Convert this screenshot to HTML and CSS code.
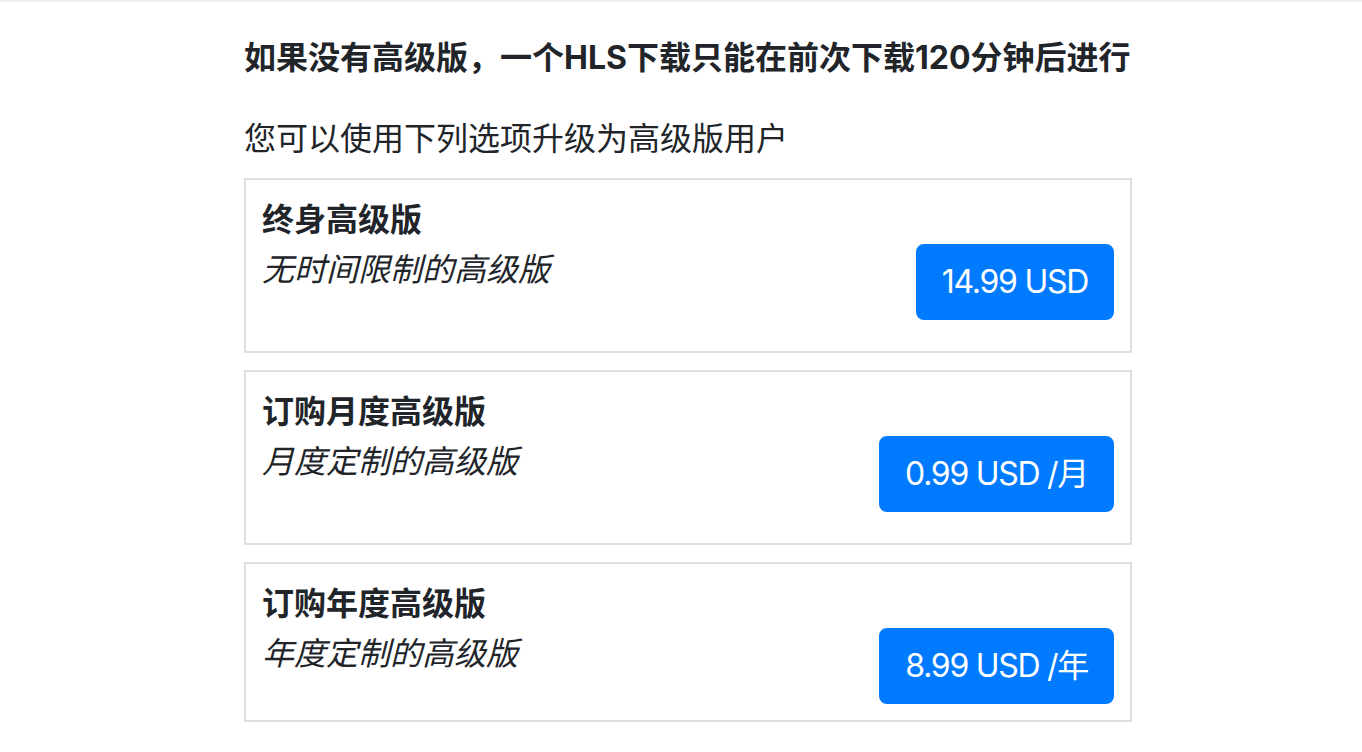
FILE: index.html
```html
<!DOCTYPE html>
<html lang="zh">
<head>
<meta charset="utf-8">
<title>高级版</title>
<link rel="stylesheet" href="styles.css">
</head>
<body>
<div class="topbar"></div>
<main class="page">
  <p class="notice">如果没有高级版，一个HLS下载只能在前次下载120分钟后进行</p>
  <p class="hint">您可以使用下列选项升级为高级版用户</p>
  <div class="plans">
    <div class="plan plan--spaced">
      <div class="plan-info">
        <div class="plan-title">终身高级版</div>
        <div class="plan-desc">无时间限制的高级版</div>
      </div>
      <div class="plan-action"><button class="btn">14.99 USD</button></div>
    </div>
    <div class="plan plan--spaced">
      <div class="plan-info">
        <div class="plan-title">订购月度高级版</div>
        <div class="plan-desc">月度定制的高级版</div>
      </div>
      <div class="plan-action"><button class="btn">0.99 USD /月</button></div>
    </div>
    <div class="plan">
      <div class="plan-info">
        <div class="plan-title">订购年度高级版</div>
        <div class="plan-desc">年度定制的高级版</div>
      </div>
      <div class="plan-action"><button class="btn">8.99 USD /年</button></div>
    </div>
  </div>
</main>
</body>
</html>
```
FILE: styles.css
```css
* { box-sizing: border-box; }
html, body {
  margin: 0;
  padding: 0;
  background: #ffffff;
}
body {
  font-family: Inter, "Noto Sans CJK SC", "Noto Sans", sans-serif;
  color: #212529;
  font-size: 32px;
  line-height: 48px;
}
.topbar {
  height: 2px;
  background: #f1f1f1;
}
.page {
  margin-left: 244px;
  width: 888px;
  padding-top: 32px;
}
.notice {
  margin: 0;
  font-weight: 700;
}
.hint {
  margin: 33px 0 0;
}
.plans {
  margin-top: 15px;
  display: flex;
  flex-direction: column;
  gap: 17px;
}
.plan {
  border: 2px solid #dfdfdf;
  padding: 16px;
  display: flex;
  justify-content: space-between;
  align-items: flex-start;
}
.plan-title {
  font-weight: 700;
  margin-bottom: 2px;
}
.plan-desc {
  font-style: italic;
}
.plan-action {
  padding-top: 48px;
}
.plan--spaced .plan-action {
  padding-bottom: 15px;
}
.btn {
  font-family: Inter, "Noto Sans CJK SC", sans-serif;
  font-size: 32px;
  line-height: 48px;
  letter-spacing: -0.04em;
  color: #ffffff;
  background: #007bff;
  border: 2px solid #007bff;
  border-radius: 8px;
  padding: 12px 24px;
  display: block;
}
```
